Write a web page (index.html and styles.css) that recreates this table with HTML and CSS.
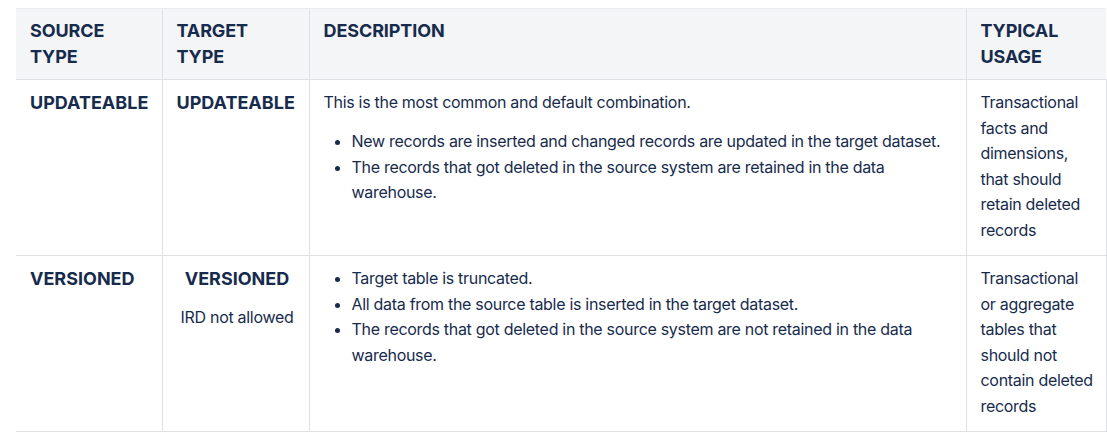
FILE: index.html
```html
<!DOCTYPE html>
<html lang="en">
<head>
<meta charset="utf-8">
<title>Source / target type combinations</title>
<link rel="stylesheet" href="styles.css">
</head>
<body>
<table class="matrix">
  <colgroup>
    <col class="c-source">
    <col class="c-target">
    <col class="c-desc">
    <col class="c-usage">
  </colgroup>
  <thead>
    <tr>
      <th>SOURCE<br>TYPE</th>
      <th>TARGET<br>TYPE</th>
      <th>DESCRIPTION</th>
      <th>TYPICAL<br>USAGE</th>
    </tr>
  </thead>
  <tbody>
    <tr>
      <td class="type">UPDATEABLE</td>
      <td class="type">UPDATEABLE</td>
      <td>
        <p>This is the most common and default combination.</p>
        <ul>
          <li>New records are inserted and changed records are updated in the target dataset.</li>
          <li>The records that got deleted in the source system are retained in the data warehouse.</li>
        </ul>
      </td>
      <td>Transactional facts and dimensions, that should retain deleted records</td>
    </tr>
    <tr>
      <td class="type">VERSIONED</td>
      <td class="type center">
        <p>VERSIONED</p>
        <p class="note">IRD not allowed</p>
      </td>
      <td>
        <ul class="flush">
          <li>Target table is truncated.</li>
          <li>All data from the source table is inserted in the target dataset.</li>
          <li>The records that got deleted in the source system are not retained in the data warehouse.</li>
        </ul>
      </td>
      <td>Transactional or aggregate tables that should not contain deleted records</td>
    </tr>
  </tbody>
</table>
</body>
</html>
```

FILE: styles.css
```css
html, body {
  margin: 0;
  padding: 0;
  background: #ffffff;
}

body {
  padding: 8px 0 0 16px;
  font-family: Inter, "Noto Sans", "Liberation Sans", sans-serif;
  color: #172b4d;
}

.matrix {
  width: 1090px;
  border-collapse: collapse;
  table-layout: fixed;
  font-size: 16px;
  line-height: 25.5px;
  letter-spacing: -0.3px;
}

.c-source { width: 146px; }
.c-target { width: 147px; }
.c-desc { width: 657px; }
.c-usage { width: 140px; }

.matrix th {
  background: #f4f5f7;
  text-align: left;
  vertical-align: top;
  font-weight: 700;
  font-size: 18px;
  line-height: 26px;
  letter-spacing: -0.1px;
  padding: 9px 8px 9px 14px;
  border-top: 1px solid #ebecf0;
  border-bottom: 1px solid #dfe1e6;
  border-left: 1px solid #dfe1e6;
}

.matrix td {
  vertical-align: top;
  padding: 10px 11px 12px 14px;
  border-bottom: 1px solid #dfe1e6;
  border-left: 1px solid #d5d8de;
  border-right: 1px solid #dfe1e6;
}

.matrix th:first-child,
.matrix td:first-child {
  border-left: none;
}

.matrix .type {
  font-weight: 700;
  font-size: 18px;
  letter-spacing: 0;
}

.matrix .center {
  text-align: center;
}

.matrix p {
  margin: 0;
}

.matrix .note {
  margin-top: 13.5px;
  font-weight: 400;
  font-size: 16px;
  letter-spacing: -0.3px;
}

.matrix ul {
  margin: 13.5px 0 0;
  padding-left: 28px;
}

.matrix ul.flush {
  margin-top: 0;
}
```
